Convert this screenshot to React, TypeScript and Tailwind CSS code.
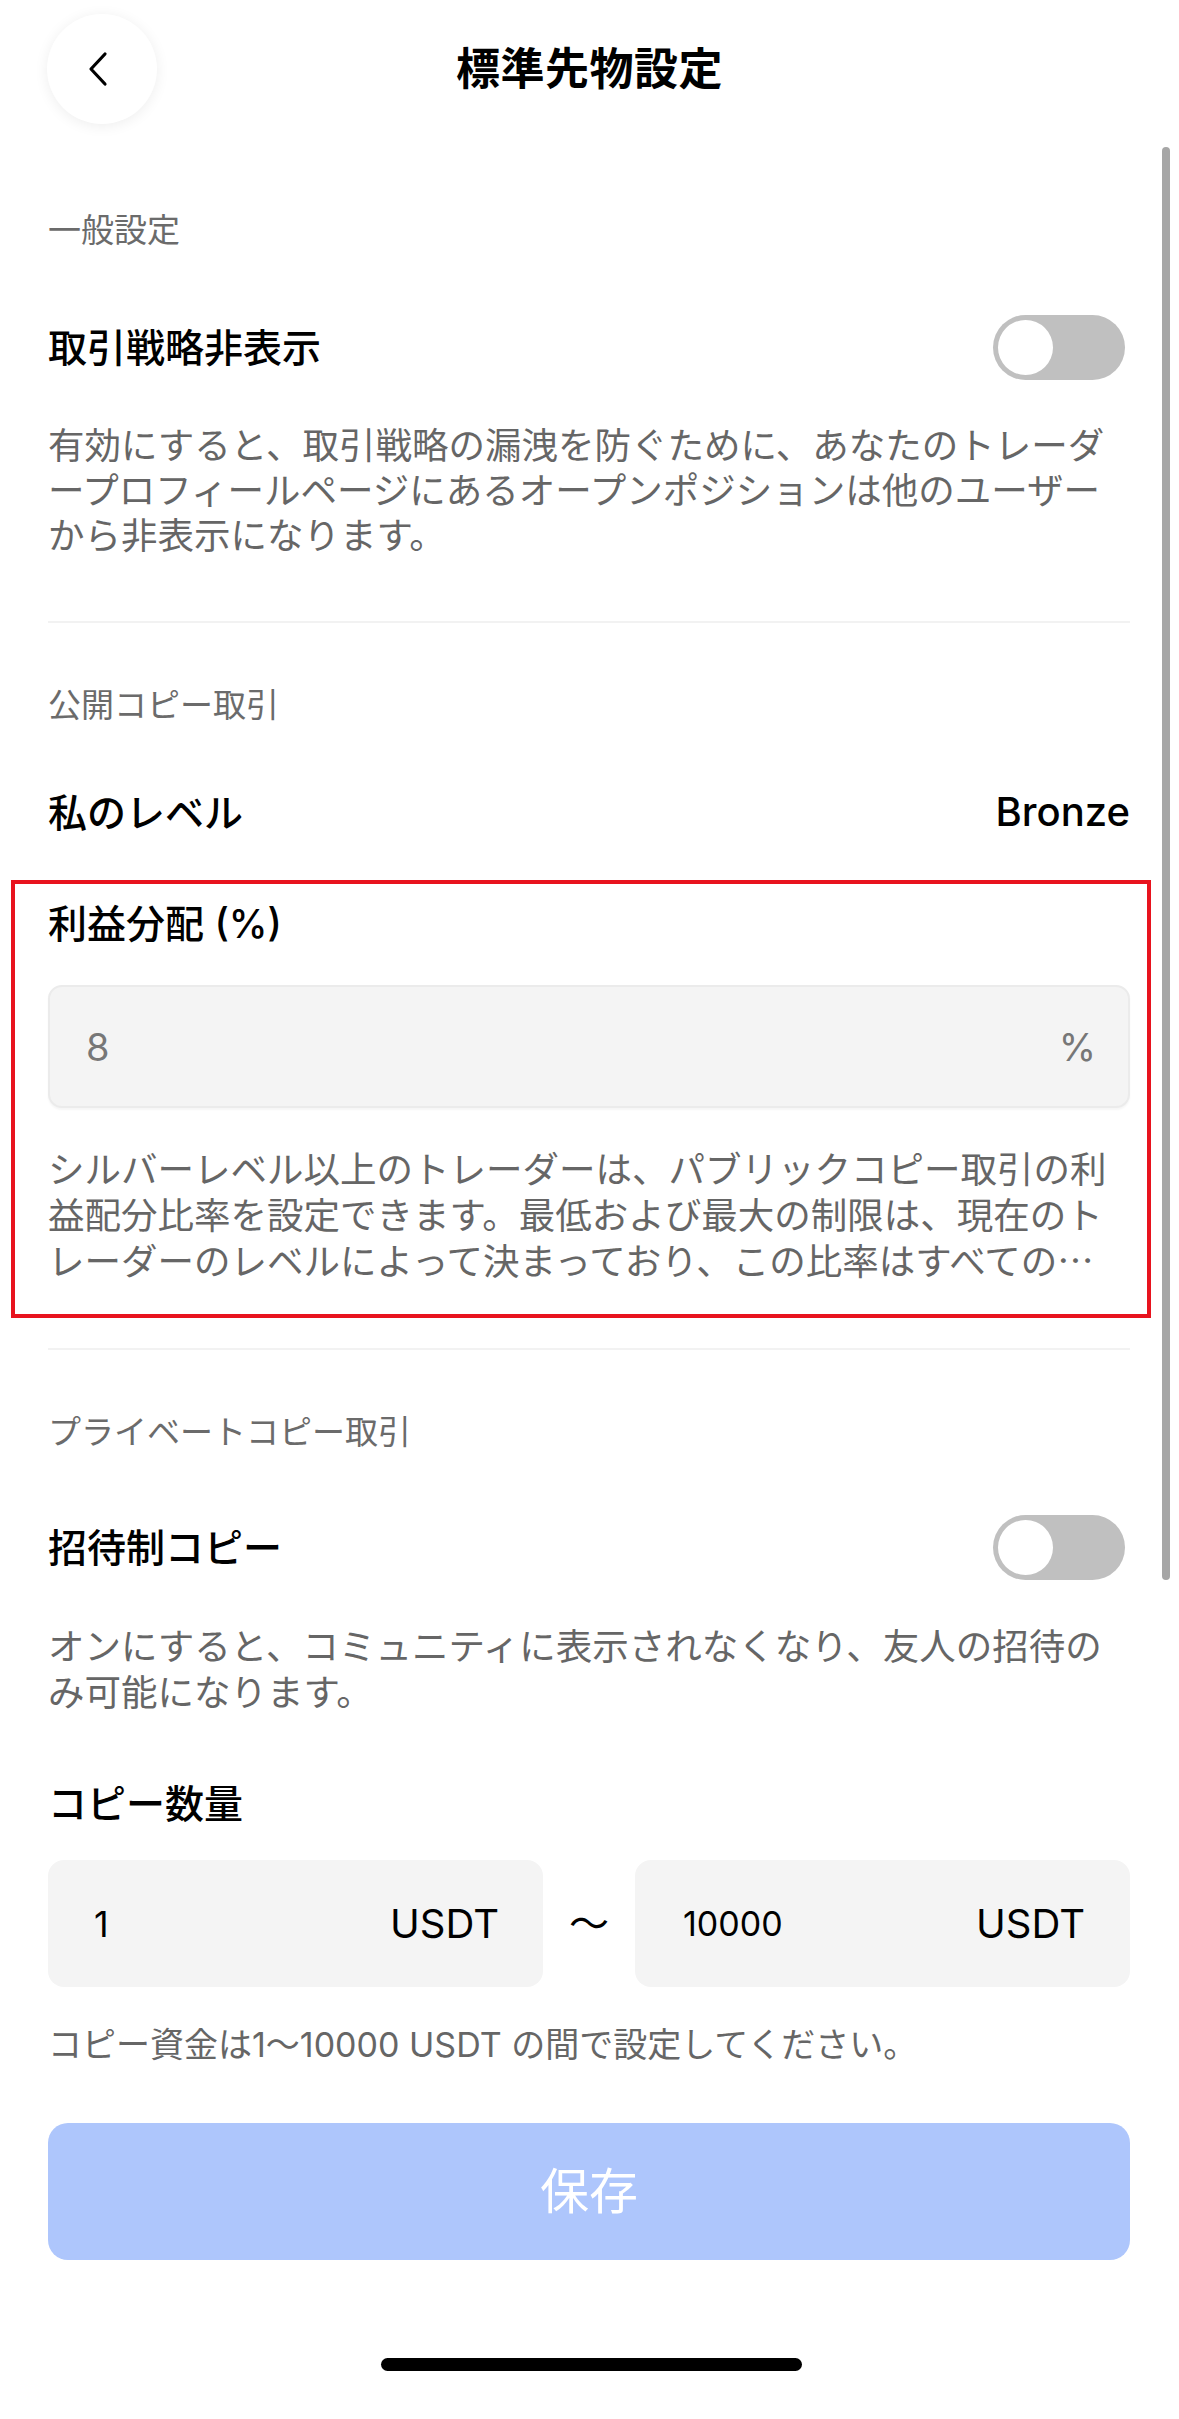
import React from "react";

function Toggle() {
  return (
    <div className="w-[132px] h-[65px] mr-[5px] rounded-full bg-[#c0c0c0] p-[5px] flex items-center shrink-0">
      <div className="w-[55px] h-[55px] rounded-full bg-white" />
    </div>
  );
}

function SectionLabel({ children }: { children: React.ReactNode }) {
  return (
    <div className="h-[60px] flex items-center text-[33px] leading-none text-[#6b6b6b]">{children}</div>
  );
}

function Divider({ className = "" }: { className?: string }) {
  return <div className={`h-[2px] bg-[#f2f2f2] ${className}`} />;
}

export default function App() {
  return (
    <div className="relative w-[1179px] min-h-[2419px] bg-white overflow-hidden font-['Inter','Noto_Sans_CJK_JP',sans-serif] text-black">
      {/* Scrollbar */}
      <div className="absolute left-[1162px] top-[147px] w-[8px] h-[1433px] rounded-full bg-[#a6a6a6]" />

      {/* Header */}
      <div className="h-[138px] grid grid-cols-[1fr_auto_1fr] items-center">
        <div className="pl-[47px]">
          <div className="w-[110px] h-[110px] rounded-full bg-white shadow-[0_2px_14px_rgba(0,0,0,0.07)] flex items-center justify-center">
            <svg width="40" height="40" viewBox="0 0 40 40" fill="none">
              <path d="M25 5 L11 20 L25 35" stroke="#000" strokeWidth="3.2" strokeLinecap="round" strokeLinejoin="round" transform="translate(-2 0)" />
            </svg>
          </div>
        </div>
        <div className="text-[44px] font-semibold leading-none tracking-[0.5px]">標準先物設定</div>
        <div />
      </div>

      <div className="pl-[48px] pr-[49px]">
        {/* General */}
        <div className="mt-[62px]">
          <SectionLabel>一般設定</SectionLabel>
        </div>
        <div className="mt-[47px] h-[80px] flex items-center justify-between">
          <div className="text-[39px] font-medium leading-none">取引戦略非表示</div>
          <Toggle />
        </div>
        <div className="mt-[37px] text-[36.5px] leading-[45px] text-[#666]">
          有効にすると、取引戦略の漏洩を防ぐために、あなたのトレーダ<br />ープロフィールページにあるオープンポジションは他のユーザー<br />から非表示になります。
        </div>

        <Divider className="mt-[62px]" />

        {/* Public copy */}
        <div className="mt-[52px]">
          <SectionLabel>公開コピー取引</SectionLabel>
        </div>
        <div className="mt-[37px] h-[80px] flex items-center justify-between">
          <div className="text-[39px] font-medium leading-none">私のレベル</div>
          <div className="text-[40px] font-medium leading-none">Bronze</div>
        </div>

        <div className="relative pt-[41px]">
          <div className="absolute left-[-37px] right-[-21px] top-[28px] h-[438px] border-[4px] border-[#e8131e] pointer-events-none" />
          <div className="h-[60px] flex items-center text-[39px] font-medium leading-none">利益分配 (%)</div>
          <div className="mt-[32px] h-[123px] rounded-[14px] bg-[#f4f4f4] border-2 border-[#ebebeb] shadow-[0_2px_2px_rgba(0,0,0,0.04)] flex items-center justify-between pl-[36px] pr-[32px] text-[38px] leading-none text-[#777]">
            <span>8</span>
            <span>%</span>
          </div>
          <div className="mt-[39px] h-[138px] overflow-hidden text-[36.5px] leading-[46px] text-[#666]">
            シルバーレベル以上のトレーダーは、パブリックコピー取引の利<br />益配分比率を設定できます。最低および最大の制限は、現在のト<br />レーダーのレベルによって決まっており、この比率はすべての<span className="leading-none font-['Noto_Sans_CJK_JP',sans-serif]">…</span>
          </div>
        </div>

        <Divider className="mt-[63px]" />

        {/* Private copy */}
        <div className="mt-[52px]">
          <SectionLabel>プライベートコピー取引</SectionLabel>
        </div>
        <div className="mt-[45px] h-[80px] flex items-center justify-between">
          <div className="text-[39px] font-medium leading-none">招待制コピー</div>
          <Toggle />
        </div>
        <div className="mt-[37px] text-[36.5px] leading-[46px] text-[#666]">
          オンにすると、コミュニティに表示されなくなり、友人の招待の<br />み可能になります。
        </div>

        <div className="mt-[47px] h-[80px] flex items-center text-[39px] font-medium leading-none">コピー数量</div>

        <div className="mt-[17px] grid grid-cols-[1fr_92px_1fr] h-[127px]">
          <div className="rounded-[16px] bg-[#f4f4f4] flex items-center justify-between pl-[46px] pr-[44px]">
            <span className="text-[36px] leading-none">1</span>
            <span className="text-[40px] leading-none">USDT</span>
          </div>
          <div className="flex items-center justify-center text-[40px] leading-none">～</div>
          <div className="rounded-[16px] bg-[#f4f4f4] flex items-center justify-between pl-[48px] pr-[45px]">
            <span className="text-[34px] leading-none">10000</span>
            <span className="text-[40px] leading-none">USDT</span>
          </div>
        </div>

        <div className="mt-[28px] h-[60px] flex items-center text-[34px] leading-none text-[#666]">
          コピー資金は1～10000 USDT の間で設定してください。
        </div>

        <div className="mt-[48px] h-[137px] rounded-[20px] bg-[#aec6fc] flex items-center justify-center text-white text-[49px] leading-none">
          保存
        </div>

        <div className="mt-[98px] flex justify-center pl-[4px]">
          <div className="w-[421px] h-[13px] rounded-full bg-black" />
        </div>
      </div>
    </div>
  );
}
